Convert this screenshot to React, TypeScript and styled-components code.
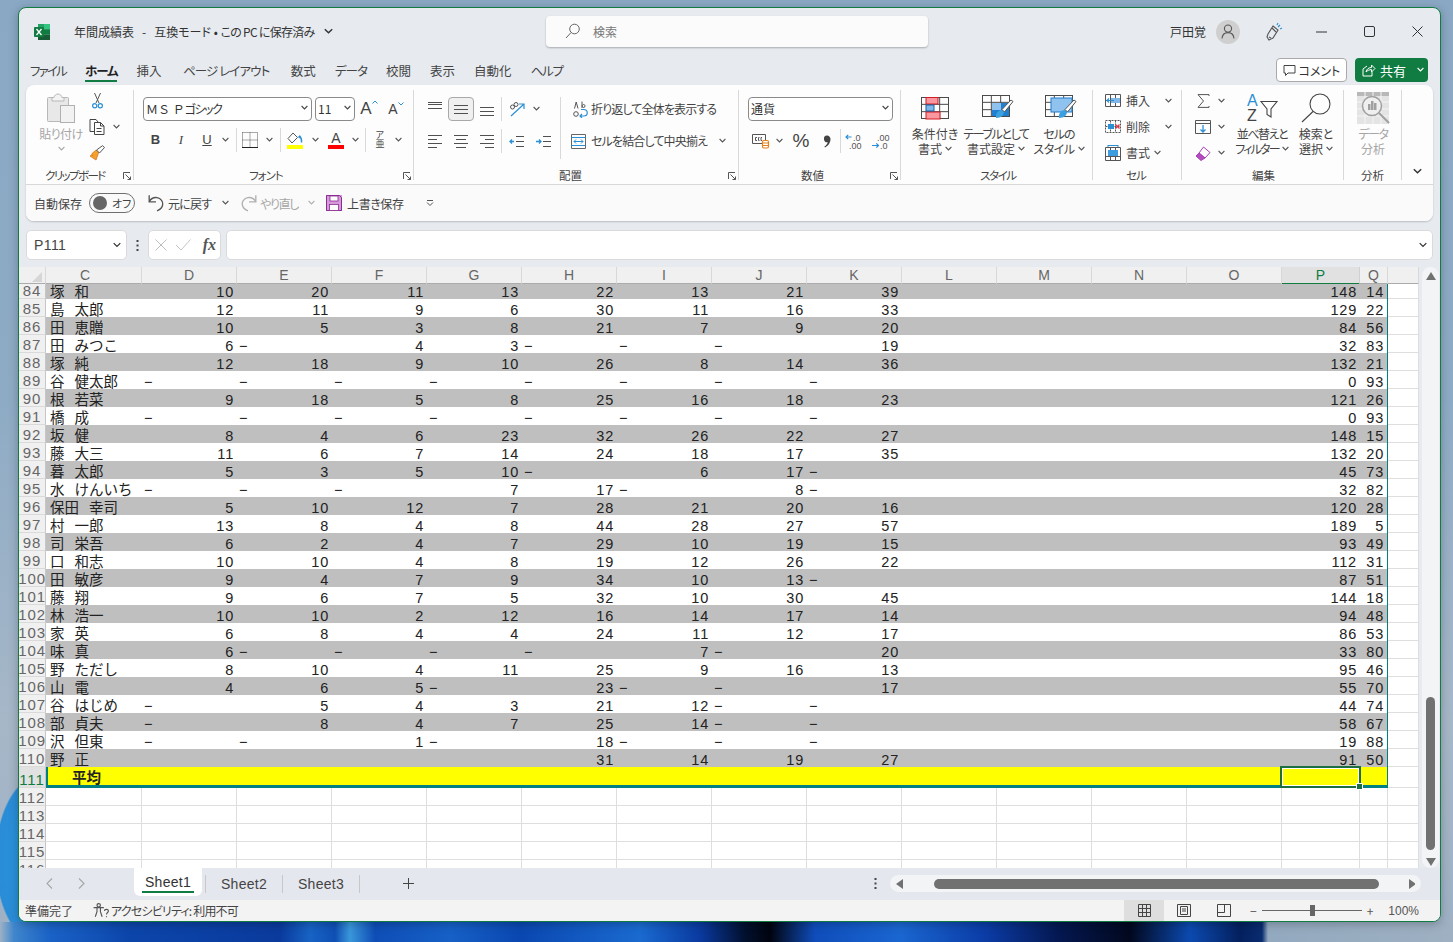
import React from 'react';
import styled, { createGlobalStyle } from 'styled-components';

const UI_FONT = '"Noto Sans CJK JP", "Noto Sans", sans-serif';
const CELL_FONT = '"Liberation Sans", "Noto Sans CJK JP", sans-serif';

const GlobalStyle = createGlobalStyle`
  html, body { margin: 0; padding: 0; }
  body {
    font-family: ${UI_FONT};
    font-feature-settings: "palt";
    font-size: 12px;
    color: #333;
    overflow: hidden;
  }
  * { box-sizing: border-box; }
`;

const Desktop = styled.div`
  width: 1453px;
  height: 942px;
  padding: 7px 12px 20px 18px;
  background:
    linear-gradient(90deg, #9db1c6 0, #3f86cc 14px, #1a62c6 50px, #0c45aa 130px, #0a3a9c 280px, #1763c4 310px, #0f4fb4 335px, #3a97da 350px, #0e4db6 375px, #1660c6 450px, #0a47b0 520px, #1a6ad0 640px, #0a3aa0 700px, #02102e 745px, #01040f 770px, #0f4dbb 815px, #1a66d0 900px, #0b3ca6 985px, #04174f 1060px, #02081e 1130px, #0c4ab0 1190px, #04205e 1240px, #0a2c70 1262px, #93a9bf 1268px, #9eb0c2 1453px) bottom / 100% 20px no-repeat,
    radial-gradient(ellipse 45px 85px at 40px 860px, #2a98e0 0, #2a8cd6 97%, transparent 100%),
    linear-gradient(180deg, #8aa8c4 0, #8eabc5 400px, #a6b7c8 720px, #9eb1c4 100%);
`;

const Window = styled.div`
  width: 1423px;
  height: 915px;
  display: flex;
  flex-direction: column;
  background: #e7ebf0;
  border: 1px solid #107c41;
  border-radius: 8px;
  overflow: hidden;
  box-shadow: 0 2px 10px rgba(0, 0, 0, 0.25);
`;

const Tight = styled.span<{ $ls: number }>`
  letter-spacing: ${(p) => p.$ls}px;
`;
const FullWidth = styled.span`
  font-feature-settings: normal;
`;

/* title bar */
const TitleBar = styled.div`
  height: 47px;
  flex: none;
  display: flex;
  align-items: center;
  padding-left: 15px;
  & > * { flex: none; }
`;
const TitleText = styled.div`
  margin-left: 24px;
  width: 245px;
  font-size: 12px;
  white-space: pre;
  color: #333;
`;
const TitleChevron = styled.span`
  display: flex;
  margin-left: 5px;
`;
const SearchBox = styled.div`
  margin-left: 213px;
  margin-top: -1px;
  width: 382px;
  height: 31px;
  display: flex;
  align-items: center;
  padding-left: 19px;
  gap: 13px;
  color: #777;
  background: #fbfbfb;
  border-radius: 4px;
  box-shadow: 0 1px 2px rgba(0, 0, 0, 0.28);
`;
const UserName = styled.div`
  margin-left: 242px;
  width: 46px;
  color: #333;
`;
const Avatar = styled.div`
  width: 24px;
  height: 24px;
  border-radius: 50%;
  background: #cfcfcf;
  display: flex;
  align-items: center;
  justify-content: center;
`;
const WinIcons = styled.div`
  margin-left: 22px;
  display: flex;
  align-items: center;
`;
const WinBtn = styled.div<{ $w: number }>`
  width: ${(p) => p.$w}px;
  flex: none;
  display: flex;
  justify-content: center;
`;

/* tab row */
const TabRow = styled.div`
  height: 30px;
  flex: none;
  display: flex;
  align-items: center;
  padding: 0 12px 0 11px;
`;
const MenuTabs = styled.div`
  display: flex;
  gap: 19px;
  flex: 1;
  padding-top: 2px;
`;
const MenuTab = styled.div<{ $on?: boolean; $ls: number; $pad?: number }>`
  position: relative;
  font-size: 12.5px;
  line-height: 20px;
  letter-spacing: ${(p) => p.$ls}px;
  padding: 0 ${(p) => p.$pad ?? 0}px;
  color: ${(p) => (p.$on ? '#222' : '#444')};
  font-weight: ${(p) => (p.$on ? 700 : 400)};
  white-space: nowrap;
  &::after {
    content: '';
    display: ${(p) => (p.$on ? 'block' : 'none')};
    position: absolute;
    left: 0;
    right: 0;
    bottom: -1px;
    height: 2px;
    background: #107c41;
  }
`;
const CommentBtn = styled.div`
  width: 71px;
  height: 24px;
  display: flex;
  align-items: center;
  justify-content: center;
  gap: 3px;
  background: #fff;
  border: 1px solid #a9a9a9;
  border-radius: 4px;
  font-size: 12px;
  color: #333;
`;
const ShareBtn = styled.div`
  margin-left: 8px;
  width: 73px;
  height: 24px;
  display: flex;
  align-items: center;
  padding-left: 7px;
  gap: 4px;
  background: #107c41;
  border-radius: 4px;
  font-size: 13px;
  color: #fff;
`;
const ShareChevron = styled.span`
  display: flex;
  margin-left: 7px;
`;

/* ribbon */
const Ribbon = styled.div`
  margin: 0 7px;
  height: 136px;
  flex: none;
  display: flex;
  flex-direction: column;
  background: #fdfdfd;
  border-radius: 8px;
  box-shadow: 0 1px 2px rgba(0, 0, 0, 0.2);
  overflow: hidden;
`;
const Groups = styled.div`
  height: 100px;
  flex: none;
  display: flex;
  padding-top: 5px;
  border-bottom: 1px solid #d8d8d8;
`;
const Group = styled.div<{ $w: number }>`
  width: ${(p) => p.$w}px;
  height: 90px;
  flex: none;
  display: flex;
  flex-direction: column;
  border-right: 1px solid #d9d9d9;
`;
const GroupBody = styled.div<{ $pl?: number; $pt?: number }>`
  flex: 1;
  display: flex;
  min-height: 0;
  padding-left: ${(p) => p.$pl ?? 0}px;
  padding-top: ${(p) => p.$pt ?? 0}px;
`;
const GroupLabel = styled.div<{ $cx: number; $ls?: number }>`
  position: relative;
  height: 14px;
  margin-bottom: -2px;
  line-height: 14px;
  font-size: 11.5px;
  letter-spacing: ${(p) => p.$ls ?? 0}px;
  color: #444;
  white-space: nowrap;
  padding-left: ${(p) => p.$cx}px;
`;
const Launcher = styled.span`
  position: absolute;
  right: 2px;
  top: 4px;
  display: flex;
`;
const Stack = styled.div<{ $w?: number; $gap?: number }>`
  display: flex;
  flex-direction: column;
  width: ${(p) => (p.$w ? `${p.$w}px` : 'auto')};
  flex: none;
  gap: ${(p) => p.$gap ?? 4}px;
`;
const ToolRow = styled.div<{ $h?: number }>`
  height: ${(p) => p.$h ?? 24}px;
  display: flex;
  align-items: center;
`;
const Tool = styled.div<{ $w: number; $pressed?: boolean; $ml?: number }>`
  width: ${(p) => p.$w}px;
  height: 24px;
  margin-left: ${(p) => p.$ml ?? 0}px;
  flex: none;
  display: flex;
  align-items: center;
  justify-content: center;
  color: #444;
  background: ${(p) => (p.$pressed ? '#f0f0f0' : 'transparent')};
  border: ${(p) => (p.$pressed ? '1px solid #a8a8a8' : 'none')};
  border-radius: 4px;
`;
const Sep = styled.div<{ $ml?: number; $h?: number }>`
  width: 1px;
  height: ${(p) => p.$h ?? 24}px;
  margin-left: ${(p) => p.$ml ?? 0}px;
  flex: none;
  background: #d9d9d9;
`;
const ComboBox = styled.div<{ $w: number; $ml?: number }>`
  width: ${(p) => p.$w}px;
  height: 24px;
  margin-left: ${(p) => p.$ml ?? 0}px;
  flex: none;
  display: flex;
  align-items: center;
  justify-content: space-between;
  padding: 0 3px 2px 2px;
  background: #fff;
  border: 1px solid #8a8a8a;
  border-radius: 4px;
  font-size: 12px;
  color: #333;
  white-space: pre;
`;
const FontLetter = styled.span<{ $size?: number; $weight?: number; $italic?: boolean; $under?: boolean; $serif?: boolean }>`
  font-family: ${(p) => (p.$serif ? '"Liberation Serif", serif' : '"Liberation Sans", "Noto Sans CJK JP", sans-serif')};
  font-size: ${(p) => p.$size ?? 13}px;
  line-height: 1.05;
  font-weight: ${(p) => p.$weight ?? 400};
  font-style: ${(p) => (p.$italic ? 'italic' : 'normal')};
  text-decoration: ${(p) => (p.$under ? 'underline' : 'none')};
  color: #444;
`;
const SizeLetter = styled.span`
  display: flex;
  align-items: flex-start;
`;
const ColorLetter = styled.span<{ $bar: string }>`
  display: flex;
  flex-direction: column;
  align-items: center;
  width: 16px;
  &::after {
    content: '';
    width: 16px;
    height: 4px;
    background: ${(p) => p.$bar};
  }
`;
const TextTool = styled.div<{ $w: number; $ml?: number }>`
  width: ${(p) => p.$w}px;
  margin-left: ${(p) => p.$ml ?? 0}px;
  display: flex;
  align-items: center;
  height: 24px;
  padding-bottom: 2px;
  flex: none;
  font-size: 12px;
  color: #444;
  white-space: nowrap;
`;
const TextToolIcon = styled.span<{ $w: number }>`
  width: ${(p) => p.$w}px;
  display: flex;
  flex: none;
  padding-top: 2px;
`;
const TextToolChevron = styled.span<{ $ml: number }>`
  margin-left: ${(p) => p.$ml}px;
  display: flex;
  padding-top: 2px;
`;
const BigBtn = styled.div<{ $w: number; $off?: boolean }>`
  width: ${(p) => p.$w}px;
  flex: none;
  display: flex;
  flex-direction: column;
  align-items: center;
  color: ${(p) => (p.$off ? '#a6a6a6' : '#444')};
  font-size: 12px;
  line-height: 15px;
  white-space: nowrap;
`;
const BigIcon = styled.div<{ $pl?: number }>`
  height: 36px;
  display: flex;
  align-items: center;
  padding-left: ${(p) => p.$pl ?? 0}px;
`;
const BigLine = styled.div`
  display: flex;
  align-items: center;
  gap: 3px;
`;
const PasteChevron = styled(BigLine)`
  height: 15px;
`;
const Collapse = styled.div`
  flex: 1;
  display: flex;
  align-items: flex-end;
  justify-content: center;
  padding-bottom: 10px;
`;

/* quick access */
const QuickBar = styled.div`
  flex: 1;
  display: flex;
  align-items: center;
  padding-left: 8px;
  background: #fafafa;
  font-size: 12px;
  color: #444;
`;
const QuickItem = styled.div<{ $ml?: number; $off?: boolean; $w?: number; $ls?: number }>`
  margin-left: ${(p) => p.$ml ?? 0}px;
  width: ${(p) => (p.$w ? `${p.$w}px` : 'auto')};
  letter-spacing: ${(p) => p.$ls ?? 0}px;
  display: flex;
  flex: none;
  align-items: center;
  white-space: nowrap;
  color: ${(p) => (p.$off ? '#a6a6a6' : '#444')};
`;
const Toggle = styled.div`
  margin-left: 7px;
  width: 46px;
  height: 20px;
  flex: none;
  display: flex;
  align-items: center;
  gap: 5px;
  padding-left: 3px;
  border: 1px solid #6f6f6f;
  border-radius: 10px;
  font-size: 11px;
`;
const ToggleKnob = styled.span`
  width: 14px;
  height: 14px;
  border-radius: 50%;
  background: #666;
`;

/* formula bar */
const FormulaBar = styled.div`
  margin: 9px 7px 7px;
  height: 30px;
  flex: none;
  display: flex;
  align-items: center;
`;
const NameBox = styled.div`
  width: 101px;
  height: 30px;
  display: flex;
  align-items: center;
  justify-content: space-between;
  padding: 0 5px 0 7px;
  background: #fff;
  border: 1px solid #dadada;
  border-radius: 5px;
  font: 14px ${CELL_FONT};
  letter-spacing: 0.4px;
  color: #444;
`;
const Kebab = styled.div`
  width: 21px;
  display: flex;
  justify-content: center;
`;
const FxBox = styled.div`
  width: 73px;
  height: 30px;
  display: flex;
  align-items: center;
  justify-content: space-between;
  padding: 0 4px 0 6px;
  background: #fff;
  border: 1px solid #dadada;
  border-radius: 5px;
  font: italic 700 16px "Liberation Serif", serif;
  color: #555;
`;
const FxMarks = styled.span`
  display: flex;
  align-items: center;
  gap: 8px;
`;
const FormulaInput = styled.div`
  margin-left: 5px;
  flex: 1;
  height: 30px;
  display: flex;
  align-items: center;
  justify-content: flex-end;
  padding-right: 5px;
  background: #fff;
  border: 1px solid #dadada;
  border-radius: 5px;
`;

/* sheet */
const SheetArea = styled.div`
  height: 601px;
  flex: none;
  display: flex;
  overflow: hidden;
`;
const Grid = styled.div`
  width: 1400px;
  flex: none;
  background: #fff;
  overflow: hidden;
`;
const COLS = '27px 96px repeat(12, 95px) 78px 28px 31px';
const SheetRow = styled.div<{ $h: number }>`
  display: grid;
  grid-template-columns: ${COLS};
  height: ${(p) => p.$h}px;
`;
const ColHead = styled.div<{ $on?: boolean; $shift?: number }>`
  display: flex;
  align-items: flex-end;
  justify-content: center;
  padding-right: ${(p) => p.$shift ?? 0}px;
  font: 14px/16px ${CELL_FONT};
  color: ${(p) => (p.$on ? '#107c41' : '#666')};
  background: ${(p) => (p.$on ? '#e1e1e1' : '#f0f0f0')};
  border-right: 1px solid ${(p) => (p.$on ? '#d0d0d0' : '#d8d8d8')};
  border-bottom: 2px solid ${(p) => (p.$on ? '#107c41' : '#ababab')};
`;
const CornerHead = styled(ColHead)`
  justify-content: flex-end;
  padding: 0 3px 1px 0;
`;
const RowHead = styled.div<{ $on?: boolean }>`
  display: flex;
  align-items: flex-end;
  justify-content: center;
  font: 15px/14px ${CELL_FONT};
  letter-spacing: 0.9px;
  white-space: nowrap;
  color: ${(p) => (p.$on ? '#107c41' : '#666')};
  background: ${(p) => (p.$on ? '#e1e1e1' : '#f0f0f0')};
  border-bottom: 1px solid #dadada;
  border-right: 1px solid #c6c6c6;
`;
type Fill = 'gray' | 'white' | 'yellow';
const FILL: Record<Fill, string> = { gray: '#bfbfbf', white: '#ffffff', yellow: '#ffff00' };
const Cell = styled.div<{ $fill?: Fill; $teal?: boolean; $total?: boolean; $leftEdge?: boolean }>`
  position: relative;
  display: flex;
  align-items: flex-end;
  justify-content: flex-end;
  padding-right: 3px;
  min-width: 0;
  font: 14.5px/14px ${CELL_FONT};
  letter-spacing: 0.8px;
  color: #222;
  white-space: nowrap;
  background: ${(p) => (p.$fill ? FILL[p.$fill] : '#fff')};
  border-right: ${(p) => (p.$teal ? '1px solid #008080' : p.$fill ? 'none' : '1px solid #dedede')};
  border-bottom: ${(p) => (p.$total ? '3px solid #008080' : p.$fill ? 'none' : '1px solid #dedede')};
  border-left: ${(p) => (p.$leftEdge ? '2px solid #008080' : 'none')};
`;
const DashCell = styled(Cell)`
  justify-content: flex-start;
  padding-left: 2px;
`;
const NameCell = styled(Cell)<{ $bold?: boolean; $indent?: number }>`
  justify-content: flex-start;
  padding-left: ${(p) => 4 + (p.$indent ?? 0)}px;
  font: ${(p) => (p.$bold ? 700 : 400)} 14.5px/13px ${CELL_FONT};
  letter-spacing: 0;
  font-feature-settings: "palt" 0;
`;
const Surname = styled.span`
  margin-right: 10px;
`;
const SelectedCell = styled(Cell)`
  &::before {
    content: '';
    position: absolute;
    left: -2px;
    top: -1px;
    right: -1px;
    bottom: -3px;
    border: 2px solid #1d6f42;
    box-shadow: inset 0 0 0 1px #fff;
    z-index: 2;
  }
  &::after {
    content: '';
    position: absolute;
    right: -2px;
    bottom: -4px;
    width: 5px;
    height: 5px;
    background: #1d6f42;
    outline: 1px solid #fff;
    z-index: 3;
  }
`;
const ScrollV = styled.div`
  flex: 1;
  padding: 0 1px 0 3px;
`;
const ScrollTrack = styled.div`
  height: 601px;
  display: flex;
  flex-direction: column;
  align-items: center;
  background: #f3f4f6;
  border-radius: 9px;
  padding-top: 5px;
`;
const ThumbV = styled.div`
  margin-top: 417px;
  width: 9px;
  height: 153px;
  background: #717171;
  border-radius: 5px;
`;
const ArrowDown = styled.div`
  margin-top: 8px;
  display: flex;
`;

/* sheet tabs */
const SheetTabs = styled.div`
  height: 32px;
  flex: none;
  display: flex;
  align-items: flex-start;
  background: #e4e7ee;
  padding-left: 24px;
  & > * { flex: none; }
`;
const NavArrows = styled.div`
  width: 91px;
  height: 30px;
  display: flex;
  align-items: center;
  gap: 25px;
  padding-left: 3px;
`;
const ActiveTab = styled.div`
  width: 68px;
  height: 28px;
  display: flex;
  flex-direction: column;
  align-items: center;
  padding-top: 3px;
  background: #fff;
  border-radius: 0 0 6px 6px;
  font: 14px/22px "Liberation Sans", sans-serif;
  color: #333;
  letter-spacing: 0.3px;
  &::after {
    content: '';
    width: 52px;
    height: 2px;
    flex: none;
    margin-top: -2px;
    background: #107c41;
  }
`;
const SheetTab = styled.div<{ $w: number }>`
  width: ${(p) => p.$w}px;
  height: 18px;
  margin-top: 7px;
  display: flex;
  align-items: center;
  justify-content: center;
  font: 14px "Liberation Sans", sans-serif;
  letter-spacing: 0.3px;
  color: #444;
  border-right: 1px solid #c8c8c8;
`;
const SheetTabGap = styled.div`
  width: 4px;
  height: 18px;
  margin-top: 7px;
  border-right: 1px solid #c8c8c8;
`;
const AddSheet = styled.div`
  width: 96px;
  height: 30px;
  display: flex;
  align-items: center;
  justify-content: center;
`;
const Kebab2 = styled.div`
  margin-left: 404px;
  width: 30px;
  height: 30px;
  display: flex;
  align-items: center;
  justify-content: center;
`;
const ScrollH = styled.div`
  margin-top: 7px;
  width: 531px;
  height: 17px;
  display: flex;
  align-items: center;
  padding: 0 6px;
  background: #f3f4f6;
  border-radius: 9px;
`;
const ThumbH = styled.div`
  margin-left: 31px;
  margin-right: 30px;
  width: 445px;
  height: 10px;
  flex: none;
  background: #717171;
  border-radius: 5px;
`;

/* status bar */
const StatusBar = styled.div`
  flex: 1;
  display: flex;
  align-items: center;
  padding-left: 6px;
  background: #f3f3f3;
  font-size: 12px;
  color: #444;
`;
const Accessibility = styled.div`
  margin-left: 20px;
  display: flex;
  align-items: center;
  gap: 2px;
  flex: 1;
  letter-spacing: -0.8px;
`;
const ViewBtn = styled.div<{ $on?: boolean }>`
  width: 40px;
  height: 21px;
  display: flex;
  align-items: center;
  justify-content: center;
  background: ${(p) => (p.$on ? '#dedede' : 'transparent')};
`;
const Zoom = styled.div`
  width: 196px;
  padding-left: 6px;
  display: flex;
  align-items: center;
  color: #555;
`;
const ZoomTrack = styled.div`
  position: relative;
  width: 100px;
  height: 1px;
  margin: 0 5px;
  background: #666;
`;
const ZoomKnob = styled.span`
  position: absolute;
  left: 48px;
  top: -5px;
  width: 5px;
  height: 11px;
  background: #666;
`;
const ZoomLabel = styled.span`
  margin-left: 15px;
  font: 12px "Liberation Sans", sans-serif;
`;

/* icons */
const DARK = '#505050';
const BLUE = '#2b8fd6';

const Chev = ({ c = '#555', s = 7 }: { c?: string; s?: number }) => (
  <svg width={s} height={s * 0.6 + 1} viewBox="0 0 7 5">
    <path d="M.6.9 3.5 3.8 6.4.9" fill="none" stroke={c} strokeWidth="1.1" />
  </svg>
);
const ExcelLogo = () => (
  <svg width="16" height="16" viewBox="0 0 16 16">
    <rect x="4" width="12" height="5.4" fill="#21a366" />
    <rect x="10" width="6" height="5.4" fill="#33c481" />
    <rect x="4" y="5.3" width="12" height="5.4" fill="#107c41" />
    <rect x="4" y="10.6" width="12" height="5.4" fill="#185c37" />
    <rect y="3" width="10" height="10" rx="1" fill="#107c41" />
    <path d="M2.5 5 7.5 11M7.5 5 2.5 11" stroke="#fff" strokeWidth="1.3" />
  </svg>
);
const SearchIcon = () => (
  <svg width="15" height="16" viewBox="0 0 15 16" fill="none" stroke="#666">
    <circle cx="9.5" cy="6" r="4.8" />
    <path d="M6 9.6 1 15" />
  </svg>
);
const PersonIcon = () => (
  <svg width="14" height="15" viewBox="0 0 14 15" fill="none" stroke="#555" strokeWidth="1.1">
    <circle cx="7" cy="4.6" r="3.6" />
    <path d="M1 14.5C1.4 10.8 3.6 8.6 7 8.6s5.6 2.2 6 5.9" />
  </svg>
);
const PenIcon = () => (
  <svg width="17" height="19" viewBox="0 0 17 19" fill="none" stroke="#555" strokeWidth="1.1">
    <path d="M7 4 12 8 7 16 3 18 1 15 2 12Z" />
    <path d="M6 6 10 10M3 15 5 16" />
    <path d="M12 5 14 3M14 7l2-1M11 3l1-2" stroke="#2b8fd6" />
  </svg>
);
const MinIcon = () => (
  <svg width="11" height="2" viewBox="0 0 11 2">
    <path d="M0 1h11" stroke="#333" />
  </svg>
);
const MaxIcon = () => (
  <svg width="11" height="11" viewBox="0 0 11 11">
    <rect x=".5" y=".5" width="10" height="10" rx="1.5" fill="none" stroke="#333" />
  </svg>
);
const CloseIcon = () => (
  <svg width="11" height="11" viewBox="0 0 11 11">
    <path d="M.5.5l10 10M10.5.5l-10 10" stroke="#333" />
  </svg>
);
const CommentIcon = () => (
  <svg width="13" height="13" viewBox="0 0 13 13" fill="none" stroke="#444">
    <path d="M1 1.5h11v7.5H5L2.5 11.5V9H1z" />
  </svg>
);
const ShareIcon = () => (
  <svg width="14" height="13" viewBox="0 0 14 13" fill="none" stroke="#fff">
    <path d="M10 7.5V12H1V5l4-3" />
    <path d="M4 8c.5-3 3-4.5 5.5-4.5V1L13 4.5 9.500 8V5.600C7.500 5.600 5.500 6.500 4 8Z" />
  </svg>
);
const PasteIcon = () => (
  <svg width="28" height="30" viewBox="0 0 28 30">
    <rect x=".5" y="4.5" width="21" height="24" rx="1" fill="#e8e8e8" stroke="#b8b8b8" />
    <path d="M7 4.5C7 2.800 9 1 11 1s4 1.800 4 3.500h2V8H5V4.500Z" fill="#f3f3f3" stroke="#b8b8b8" />
    <rect x="13.5" y="12.5" width="14" height="17" fill="#f2f2f2" stroke="#b0b0b0" />
  </svg>
);
const CutIcon = () => (
  <svg width="11" height="16" viewBox="0 0 11 16" fill="none">
    <path d="M2.5 0 7 10M8.500 0 4 10" stroke="#555" />
    <circle cx="2.7" cy="12.8" r="2.1" stroke={BLUE} strokeWidth="1.2" />
    <circle cx="8.3" cy="12.8" r="2.1" stroke={BLUE} strokeWidth="1.2" />
  </svg>
);
const CopyIcon = () => (
  <svg width="16" height="16" viewBox="0 0 16 16" fill="none" stroke="#444">
    <path d="M5 12.5H1V.5h6l2 2.500" />
    <path d="M5.5 3.5h6l3.500 3.500v8.500H5.500z" />
    <path d="M11.5 3.5V7H15M7.500 9.500h5M7.500 12.500h5" />
  </svg>
);
const PainterIcon = () => (
  <svg width="16" height="16" viewBox="0 0 16 16">
    <path d="M9.5 5.5 10 6.500 7 15l-6-4 2-1 1 .5L2.500 9l4-3.500z" fill="#f4a12c" stroke="#d9751a" strokeWidth=".8" />
    <path d="M7.5 5 10.500 8 15.500 2.500 13.500.7z" fill="#fff" stroke="#555" />
  </svg>
);
const LauncherIcon = () => (
  <svg width="8" height="8" viewBox="0 0 8 8" fill="none" stroke="#555">
    <path d="M.5 7V.5H7M2.500 2.500 7.500 7.500M7.500 4.500v3h-3" />
  </svg>
);
const Caret = ({ up }: { up?: boolean }) => (
  <svg width="6" height="4" viewBox="0 0 6 4">
    <path d={up ? 'M.5 3.5 3 1l2.500 2.500' : 'M.5.5 3 3 5.500.5'} fill="none" stroke={BLUE} />
  </svg>
);
const BorderIcon = () => (
  <svg width="16" height="16" viewBox="0 0 16 16" fill="none">
    <path d="M.5.5h15v15M.5.5v15M8 .5v15M.5 8h15" stroke="#555" strokeDasharray="1 1" />
    <path d="M0 15.5h16" stroke="#222" />
  </svg>
);
const BucketIcon = () => (
  <svg width="16" height="13" viewBox="0 0 16 13" fill="none">
    <path d="M6 1 1 6.500 5 11l5.500-5.500z" stroke="#555" fill="#fff" />
    <path d="M12 4c2 1 2.800 3 2.500 6.500" stroke={BLUE} strokeWidth="1.5" />
    <path d="M10.7 5 13.300 3.600V6.800z" fill={BLUE} />
  </svg>
);
const Lines = ({ rows }: { rows: [number, number, number][] }) => (
  <svg width="16" height="14" viewBox="0 0 16 14">
    {rows.map(([a, b, y]) => (
      <path key={`${a}${b}${y}`} d={`M${a} ${y + 0.5}H${b}`} stroke={DARK} />
    ))}
  </svg>
);
const IndentIcon = ({ more }: { more?: boolean }) => (
  <svg width="15" height="11" viewBox="0 0 15 11" fill="none">
    <path d="M7 .5h8M7 5.500h8M7 10.500h8" stroke={DARK} />
    <path d={more ? 'M0 5.5h4.500M3 3.500l2 2-2 2' : 'M5 5.5H.8M3 3.500l-2 2 2 2'} stroke={BLUE} strokeWidth="1.3" />
  </svg>
);
const OrientIcon = () => (
  <svg width="17" height="15" viewBox="0 0 17 15" fill="none">
    <path d="M2 14 14.500 2.500M10 2h5v5" stroke={BLUE} strokeWidth="1.2" />
    <circle cx="3.5" cy="5" r="2" stroke="#555" />
    <circle cx="7" cy="2.5" r="2" stroke="#555" />
  </svg>
);
const WrapIcon = () => (
  <svg width="15" height="17" viewBox="0 0 15 17" fill="none">
    <path d="M7 15h3.500c5 0 5-6.500 0-6.500H8M9 13l-2 2 2 2" stroke={BLUE} strokeWidth="1.2" />
    <circle cx="3" cy="13" r="2.3" stroke="#555" />
    <path d="M1.5 7.500 3.200 1l1.800 6.500M9 .5v6.500M9 5c.5-2 3-2 3 0s-2.500 2-3 0" stroke="#555" />
  </svg>
);
const MergeIcon = () => (
  <svg width="15" height="15" viewBox="0 0 15 15" fill="none">
    <path d="M.5.5h14v14H.5z" stroke="#666" />
    <path d="M.5 3.500h14M.5 11.500h14" stroke="#2b8fd6" />
    <path d="M3 7.500h9M5 5.500l-2 2 2 2M10 5.500l2 2-2 2" stroke={BLUE} />
  </svg>
);
const AccountIcon = () => (
  <svg width="18" height="16" viewBox="0 0 18 16" fill="none">
    <path d="M.5 1.500h13v9H.5z" stroke="#555" />
    <path d="M5 4.500H3.500v3H5M7.500 4.500H6.500v3h1M10 4.500H9v3h1" stroke="#555" />
    <rect x="10.5" y="7.5" width="6" height="7.5" rx="1.5" fill="#fff" stroke="#e2831e" strokeWidth="1.2" />
    <path d="M10.5 10h6M10.500 12.500h6" stroke="#e2831e" />
  </svg>
);
const CommaIcon = () => (
  <svg width="8" height="13" viewBox="0 0 8 13">
    <path d="M4 .5a3.500 3.500 0 0 1 3.500 3.800c0 3.600-2.500 6.700-5.500 8.200l-.6-.9c1.800-1.100 3-2.800 3.300-4.300A3.300 3.300 0 1 1 4 .5z" fill="#444" />
  </svg>
);
const DecimalIcon = ({ more }: { more?: boolean }) => (
  <svg width="18" height="17" viewBox="0 0 18 17" fontFamily="Liberation Sans, sans-serif" fontSize="9" fill="#555">
    <text x={more ? 8 : 5} y="8">{more ? '.0' : '.00'}</text>
    <text x={more ? 4 : 8} y="16">{more ? '.00' : '.0'}</text>
    <path d={more ? 'M6.500 4H1M3.200 1.800 1 4l2.200 2.200' : 'M0 12.500h6.500M4.300 10.300l2.200 2.200-2.200 2.200'} fill="none" stroke={BLUE} strokeWidth="1.2" />
  </svg>
);
const GridBase = ({ w = 27, h = 22 }: { w?: number; h?: number }) => (
  <g fill="none" stroke="#4a4a4a" strokeWidth="1">
    <rect x=".5" y=".5" width={w - 1} height={h - 1} />
    <path d={`M${w / 3} 0V${h}M${(w * 2) / 3} 0V${h}M0 ${h / 3}H${w}M0 ${(h * 2) / 3}H${w}`} />
  </g>
);
const CondIcon = () => (
  <svg width="28" height="23" viewBox="0 0 28 23">
    <GridBase w={28} h={22} />
    <rect x="5" y=".5" width="12" height="6.5" fill="#f8979f" stroke="#d41a22" />
    <rect x="5" y="15" width="14" height="7" fill="#f8979f" stroke="#d41a22" />
    <rect x="5" y="8" width="8" height="6" fill="#7fb8e8" stroke="#1a5fa8" />
  </svg>
);
const Brush = () => (
  <g>
    <path d="M14 20c1-4 4-5 6-5l2 2c0 3-3 6-8 6z" fill="#3aa0e0" />
    <path d="M20 14.500 29 5l2 1.500-8.500 10.500z" fill="#fff" stroke="#555" />
  </g>
);
const TableStyleIcon = () => (
  <svg width="32" height="27" viewBox="0 0 32 27">
    <GridBase w={28} h={22} />
    <rect x="10" y="8" width="17" height="13" fill="#1f7fd0" />
    <rect x="10" y="8" width="9" height="7" fill="#8fc2ee" />
    <Brush />
  </svg>
);
const CellStyleIcon = () => (
  <svg width="32" height="27" viewBox="0 0 32 27">
    <GridBase w={28} h={22} />
    <rect x="6" y="3" width="21" height="14" fill="#8fc2ee" stroke="#1f7fd0" />
    <Brush />
  </svg>
);
const InsertCellIcon = () => (
  <svg width="16" height="14" viewBox="0 0 16 14" fill="none">
    <path d="M.5.5h15v12H.5zM.5 6.500h15M5.500.5v12M10.500.5v12" stroke="#555" />
    <rect x="6" y="4" width="9" height="5" fill="#7fb8e8" />
    <path d="M9 6.500H2M4 4.500l-2 2 2 2" stroke={BLUE} strokeWidth="1.2" />
  </svg>
);
const DeleteCellIcon = () => (
  <svg width="16" height="14" viewBox="0 0 16 14" fill="none">
    <path d="M.5.5h15v12H.5zM.5 6.500h15M5.500.5v12M10.500.5v12" stroke="#555" strokeDasharray="2 1" />
    <rect x="3" y="4" width="6" height="5" fill="#2b8fd6" />
    <path d="M10.5 4.500l4 4M14.500 4.500l-4 4" stroke="#e2364a" strokeWidth="1.2" />
  </svg>
);
const FormatCellIcon = () => (
  <svg width="16" height="16" viewBox="0 0 16 16" fill="none">
    <path d="M.5 2.500h15v13H.5zM.5 11.500h15M5.500 2.500v13M10.500 2.500v13" stroke="#555" />
    <rect x="3" y="5" width="10" height="6" fill="#3d9be0" />
    <path d="M3 .5h10M3 0v2M13 0v2" stroke={BLUE} />
  </svg>
);
const SigmaIcon = () => (
  <svg width="13" height="14" viewBox="0 0 13 14" fill="none">
    <path d="M12 2V.6H1L6.500 7 1 13.400h11V12" stroke="#555" />
  </svg>
);
const FillDownIcon = () => (
  <svg width="16" height="14" viewBox="0 0 16 14" fill="none">
    <path d="M.5.5h15v13H.5zM.5 3.500h15" stroke="#555" />
    <path d="M8 5v7M5.500 9.500 8 12l2.500-2.500" stroke={BLUE} strokeWidth="1.3" />
  </svg>
);
const EraserIcon = () => (
  <svg width="16" height="15" viewBox="0 0 16 15">
    <path d="M8.500 1 15 6.500 10 12 4 7z" fill="#fff" stroke="#a83fb5" />
    <path d="M4 7 1 10l5 4.500 4-2.500z" fill="#b44cc0" stroke="#a83fb5" />
  </svg>
);
const SortIcon = () => (
  <svg width="38" height="36" viewBox="0 -4 38 36" fontFamily="Liberation Sans, sans-serif" fontSize="16">
    <text x="4" y="12" fill="#2b8fd6">A</text>
    <text x="4" y="27" fill="#444">Z</text>
    <path d="M18 7.500h16L28 15v8l-4-2.500V15z" fill="#fff" stroke="#444" strokeWidth="1.1" />
  </svg>
);
const FindIcon = () => (
  <svg width="30" height="30" viewBox="0 0 30 30" fill="none" stroke="#444" strokeWidth="1.1">
    <circle cx="19" cy="11" r="10" />
    <path d="M12 18.500 1 29" />
  </svg>
);
const AnalysisIcon = () => (
  <svg width="33" height="32" viewBox="0 0 33 32" fill="none">
    <rect width="32" height="32" fill="#e4e4e4" />
    <rect y="0" width="32" height="4" fill="#b8b8b8" />
    <path d="M0 10h32M0 17h32M0 24h32M8 0v32M16 0v32M24 0v32" stroke="#f4f4f4" />
    <circle cx="15" cy="14" r="9.5" fill="#efefef" stroke="#a0a0a0" strokeWidth="1.5" />
    <rect x="11" y="12" width="2.5" height="6" fill="#a0a0a0" />
    <rect x="14" y="9" width="2.5" height="9" fill="#a0a0a0" />
    <rect x="17" y="11" width="2.5" height="7" fill="#a0a0a0" />
    <path d="M22 21 32 31" stroke="#a0a0a0" strokeWidth="2" />
  </svg>
);
const UndoIcon = ({ c, flip }: { c: string; flip?: boolean }) => (
  <svg width="17" height="18" viewBox="0 0 15 16" fill="none" stroke={c} strokeWidth="1.2">
    <g transform={flip ? 'matrix(-1 0 0 1 15 0)' : undefined}>
      <path d="M1 1v6h6" />
      <path d="M1.2 6.500C3 3.500 5.500 2.800 8 3.200c3.500.7 5.500 3.600 5 6.300-.3 2.500-2.500 4.500-5 5.500" />
    </g>
  </svg>
);
const SaveIcon = () => (
  <svg width="16" height="16" viewBox="0 0 16 16">
    <rect width="16" height="16" fill="#d69ad8" />
    <path d="M.5.5h13l2 2v13H.5z" fill="#d69ad8" stroke="#8a2c92" />
    <rect x="4" y="1" width="8" height="5" fill="#fff" stroke="#8a2c92" strokeWidth=".8" />
    <rect x="3.5" y="9.5" width="9" height="6" fill="#fff" stroke="#8a2c92" strokeWidth=".8" />
  </svg>
);
const QatMenuIcon = () => (
  <svg width="8" height="6" viewBox="0 0 8 6" fill="none" stroke="#555">
    <path d="M1 .5h6M1 2.500 4 5.500l3-3" />
  </svg>
);
const KebabIcon = () => (
  <svg width="3" height="11" viewBox="0 0 3 11" fill="#444">
    <rect x=".5" width="2" height="2" />
    <rect x=".5" y="4.5" width="2" height="2" />
    <rect x=".5" y="9" width="2" height="2" />
  </svg>
);
const CrossMark = () => (
  <svg width="12" height="12" viewBox="0 0 12 12">
    <path d="M.5.5l11 11M11.500.5l-11 11" stroke="#bdbdbd" />
  </svg>
);
const CheckMark = () => (
  <svg width="16" height="12" viewBox="0 0 16 12" fill="none">
    <path d="M1 6l5 5L15.500.5" stroke="#c4c4c4" />
  </svg>
);
const Tri = ({ dir, c = '#717171' }: { dir: 'up' | 'down' | 'left' | 'right'; c?: string }) => {
  const d = { up: 'M0 8 5 0l5 8z', down: 'M0 0h10L5 8z', left: 'M7 0v10L0 5z', right: 'M0 0v10l7-5z' }[dir];
  return (
    <svg width={dir === 'up' || dir === 'down' ? 10 : 7} height={dir === 'up' || dir === 'down' ? 8 : 10}>
      <path d={d} fill={c} />
    </svg>
  );
};
const NavArrow = ({ right }: { right?: boolean }) => (
  <svg width="7" height="11" viewBox="0 0 7 11" fill="none" stroke="#a6a6a6" strokeWidth="1.1">
    <path d={right ? 'M1 .5l5 5-5 5' : 'M6 .5l-5 5 5 5'} />
  </svg>
);
const PlusIcon = () => (
  <svg width="11" height="11" viewBox="0 0 11 11">
    <path d="M5.500 0v11M0 5.500h11" stroke="#444" />
  </svg>
);
const A11yIcon = () => (
  <svg width="16" height="15" viewBox="0 0 14 13" fill="none" stroke="#555">
    <circle cx="5" cy="2" r="1.5" />
    <path d="M.5 4h9M3.500 4.500v3L2 12M6.500 4.500v3L8 12" />
    <path d="M10 7c0-2 3.500-2 3.500 0 0 1.300-1.700 1.300-1.700 3M11.800 11.500v1" />
  </svg>
);
const NormalViewIcon = () => (
  <svg width="13" height="13" viewBox="0 0 13 13" fill="none" stroke="#444">
    <path d="M.5.5h12v12H.5zM4.500.5v12M8.500.5v12M.5 4.500h12M.5 8.500h12" />
  </svg>
);
const PageViewIcon = () => (
  <svg width="14" height="13" viewBox="0 0 14 13" fill="none" stroke="#444">
    <path d="M.5.500h13v12H.5zM3.500 2.500h7v8h-7zM5 5h4M5 7h4" />
  </svg>
);
const BreakViewIcon = () => (
  <svg width="14" height="13" viewBox="0 0 14 13" fill="none" stroke="#444">
    <path d="M.5.500h13v12H.5zM.5 8.500h7V.5" />
  </svg>
);
const CornerMark = () => (
  <svg width="10" height="10" viewBox="0 0 10 10">
    <path d="M10 0v10H0z" fill="#d6d6d6" />
  </svg>
);

/* data */
type Val = number | '-' | null;
type Row = [number, string, string, Val[], number, number];
const D: Val = '-';
const ROWS: Row[] = [
  [84, '塚', '和', [10, 20, 11, 13, 22, 13, 21, 39], 148, 14],
  [85, '島', '太郎', [12, 11, 9, 6, 30, 11, 16, 33], 129, 22],
  [86, '田', '恵贈', [10, 5, 3, 8, 21, 7, 9, 20], 84, 56],
  [87, '田', 'みつこ', [6, D, 4, 3, D, D, D, 19], 32, 83],
  [88, '塚', '純', [12, 18, 9, 10, 26, 8, 14, 36], 132, 21],
  [89, '谷', '健太郎', [D, D, D, D, D, D, D, D], 0, 93],
  [90, '根', '若菜', [9, 18, 5, 8, 25, 16, 18, 23], 121, 26],
  [91, '橋', '成', [D, D, D, D, D, D, D, D], 0, 93],
  [92, '坂', '健', [8, 4, 6, 23, 32, 26, 22, 27], 148, 15],
  [93, '藤', '大三', [11, 6, 7, 14, 24, 18, 17, 35], 132, 20],
  [94, '暮', '太郎', [5, 3, 5, 10, D, 6, 17, D], 45, 73],
  [95, '水', 'けんいち', [D, D, D, 7, 17, D, 8, D], 32, 82],
  [96, '保田', '幸司', [5, 10, 12, 7, 28, 21, 20, 16], 120, 28],
  [97, '村', '一郎', [13, 8, 4, 8, 44, 28, 27, 57], 189, 5],
  [98, '司', '栄吾', [6, 2, 4, 7, 29, 10, 19, 15], 93, 49],
  [99, '口', '和志', [10, 10, 4, 8, 19, 12, 26, 22], 112, 31],
  [100, '田', '敏彦', [9, 4, 7, 9, 34, 10, 13, D], 87, 51],
  [101, '藤', '翔', [9, 6, 7, 5, 32, 10, 30, 45], 144, 18],
  [102, '林', '浩一', [10, 10, 2, 12, 16, 14, 17, 14], 94, 48],
  [103, '家', '英', [6, 8, 4, 4, 24, 11, 12, 17], 86, 53],
  [104, '味', '真', [6, D, D, D, D, 7, D, 20], 33, 80],
  [105, '野', 'ただし', [8, 10, 4, 11, 25, 9, 16, 13], 95, 46],
  [106, '山', '電', [4, 6, 5, D, 23, D, D, 17], 55, 70],
  [107, '谷', 'はじめ', [D, 5, 4, 3, 21, 12, D, D], 44, 74],
  [108, '部', '貞夫', [D, 8, 4, 7, 25, 14, D, D], 58, 67],
  [109, '沢', '但東', [D, D, 1, D, 18, D, D, D], 19, 88],
  [110, '野', '正', [null, null, null, null, 31, 14, 19, 27], 91, 50],
];
const COL_NAMES = ['C', 'D', 'E', 'F', 'G', 'H', 'I', 'J', 'K', 'L', 'M', 'N', 'O', 'P', 'Q', ''];
const MENU: [string, number, number?][] = [
  ['ファイル', -1.8],
  ['ホーム', -1.1],
  ['挿入', 0],
  ['ページ レイアウト', -0.9, 2.5],
  ['数式', 0],
  ['データ', -0.9],
  ['校閲', 0],
  ['表示', 0],
  ['自動化', 0],
  ['ヘルプ', -1.2],
];

const DataRow = ({ row, first }: { row: Row; first: boolean }) => {
  const [no, last, given, vals, total, rank] = row;
  const fill: Fill = no % 2 === 0 ? 'gray' : 'white';
  return (
    <SheetRow $h={first ? 15 : 18}>
      <RowHead>{no}</RowHead>
      <NameCell $fill={fill}>
        <Surname>{last}</Surname>
        {given}
      </NameCell>
      {vals.map((v, i) =>
        v === '-' ? (
          <DashCell key={i} $fill={fill}>−</DashCell>
        ) : (
          <Cell key={i} $fill={fill}>{v}</Cell>
        ),
      )}
      {[0, 1, 2, 3].map((i) => (
        <Cell key={`e${i}`} $fill={fill} />
      ))}
      <Cell $fill={fill}>{total}</Cell>
      <Cell $fill={fill} $teal>{rank}</Cell>
      <Cell />
    </SheetRow>
  );
};

const Sheet = () => (
  <Grid>
    <SheetRow $h={17}>
      <CornerHead><CornerMark /></CornerHead>
      {COL_NAMES.map((c, i) => (
        <ColHead key={i} $on={c === 'P'} $shift={c === 'C' ? 17 : 0}>{c}</ColHead>
      ))}
    </SheetRow>
    {ROWS.map((r, i) => (
      <DataRow key={r[0]} row={r} first={i === 0} />
    ))}
    <SheetRow $h={21}>
      <RowHead $on>111</RowHead>
      <NameCell $fill="yellow" $total $leftEdge $bold $indent={20}>
        <Surname>平均</Surname>
      </NameCell>
      {Array.from({ length: 12 }).map((_, i) => (
        <Cell key={i} $fill="yellow" $total />
      ))}
      <SelectedCell $fill="yellow" $total />
      <Cell $fill="yellow" $total $teal />
      <Cell />
    </SheetRow>
    {[112, 113, 114, 115, 116].map((n) => (
      <SheetRow key={n} $h={18}>
        <RowHead>{n}</RowHead>
        {COL_NAMES.map((c, i) => (
          <Cell key={i} />
        ))}
      </SheetRow>
    ))}
  </Grid>
);

const App = () => (
  <Desktop>
    <GlobalStyle />
    <Window>
      <TitleBar>
        <ExcelLogo />
        <TitleText>
          {'年間成績表   -   互換モード • '}
          <Tight $ls={-0.7}>この PC に保存済み</Tight>
        </TitleText>
        <TitleChevron><Chev c="#333" s={9} /></TitleChevron>
        <SearchBox><SearchIcon />検索</SearchBox>
        <UserName>戸田覚</UserName>
        <Avatar><PersonIcon /></Avatar>
        <WinIcons>
          <WinBtn $w={24}><PenIcon /></WinBtn>
          <WinBtn $w={70}><MinIcon /></WinBtn>
          <WinBtn $w={26}><MaxIcon /></WinBtn>
          <WinBtn $w={70}><CloseIcon /></WinBtn>
        </WinIcons>
      </TitleBar>

      <TabRow>
        <MenuTabs>
          {MENU.map(([m, ls, pad]) => (
            <MenuTab key={m} $on={m === 'ホーム'} $ls={ls} $pad={pad}>{m}</MenuTab>
          ))}
        </MenuTabs>
        <CommentBtn><CommentIcon />コメント</CommentBtn>
        <ShareBtn>
          <ShareIcon />共有
          <ShareChevron><Chev c="#fff" /></ShareChevron>
        </ShareBtn>
      </TabRow>

      <Ribbon>
        <Groups>
          <Group $w={108}>
            <GroupBody $pl={10}>
              <BigBtn $w={50} $off>
                <BigIcon><PasteIcon /></BigIcon>
                <Tight $ls={-0.5}>貼り付け</Tight>
                <PasteChevron><Chev c="#aaa" /></PasteChevron>
              </BigBtn>
              <Stack $w={36}>
                <ToolRow $h={22}><Tool $w={26} $ml={-2}><CutIcon /></Tool></ToolRow>
                <ToolRow $h={22}>
                  <Tool $w={26} $ml={-2}><CopyIcon /></Tool>
                  <Tool $w={12}><Chev /></Tool>
                </ToolRow>
                <ToolRow $h={22}><Tool $w={26} $ml={-2}><PainterIcon /></Tool></ToolRow>
              </Stack>
            </GroupBody>
            <GroupLabel $cx={19} $ls={-1.6}>クリップボード<Launcher><LauncherIcon /></Launcher></GroupLabel>
          </Group>

          <Group $w={280}>
            <GroupBody $pl={9} $pt={7}>
              <Stack $gap={7}>
                <ToolRow>
                  <ComboBox $w={169}>
                    <span>
                      <FullWidth>{'ＭＳ Ｐ'}</FullWidth>
                      <Tight $ls={-1.5}>ゴシック</Tight>
                    </span>
                    <Chev c="#444" />
                  </ComboBox>
                  <ComboBox $w={40} $ml={3}>
                    11
                    <Chev c="#444" />
                  </ComboBox>
                  <Tool $w={26} $ml={1}>
                    <SizeLetter><FontLetter $size={17}>A</FontLetter><Caret up /></SizeLetter>
                  </Tool>
                  <Tool $w={26} $ml={1}>
                    <SizeLetter><FontLetter $size={14}>A</FontLetter><Caret /></SizeLetter>
                  </Tool>
                </ToolRow>
                <ToolRow>
                  <Tool $w={25}><FontLetter $weight={700}>B</FontLetter></Tool>
                  <Tool $w={26}><FontLetter $italic $serif>I</FontLetter></Tool>
                  <Tool $w={26}><FontLetter $under>U</FontLetter></Tool>
                  <Tool $w={10}><Chev /></Tool>
                  <Sep $ml={6} />
                  <Tool $w={26}><BorderIcon /></Tool>
                  <Tool $w={12}><Chev /></Tool>
                  <Sep $ml={5} />
                  <Tool $w={28}><ColorLetter $bar="#ffff00"><BucketIcon /></ColorLetter></Tool>
                  <Tool $w={12}><Chev /></Tool>
                  <Tool $w={30}>
                    <ColorLetter $bar="#ff0000"><FontLetter $size={14}>A</FontLetter></ColorLetter>
                  </Tool>
                  <Tool $w={8}><Chev /></Tool>
                  <Sep $ml={6} />
                  <Tool $w={28}>
                    <Stack $gap={0}>
                      <FontLetter $size={9}>ア</FontLetter>
                      <FontLetter $size={9}>亜</FontLetter>
                    </Stack>
                  </Tool>
                  <Tool $w={8}><Chev /></Tool>
                </ToolRow>
              </Stack>
            </GroupBody>
            <GroupLabel $cx={115} $ls={-1}>フォント<Launcher><LauncherIcon /></Launcher></GroupLabel>
          </Group>

          <Group $w={325}>
            <GroupBody $pl={8} $pt={7}>
              <Stack $w={138} $gap={8}>
                <ToolRow>
                  <Tool $w={26}><Lines rows={[[1, 15, 2], [1, 15, 6], [1, 15, 0]]} /></Tool>
                  <Tool $w={26} $pressed><Lines rows={[[1, 15, 3], [1, 15, 7], [1, 15, 11]]} /></Tool>
                  <Tool $w={26}><Lines rows={[[1, 15, 5], [1, 15, 9], [1, 15, 13]]} /></Tool>
                  <Sep $ml={1} />
                  <Tool $w={28} $ml={1}><OrientIcon /></Tool>
                  <Tool $w={10}><Chev /></Tool>
                </ToolRow>
                <ToolRow>
                  <Tool $w={26}><Lines rows={[[1, 15, 1], [1, 10, 5], [1, 15, 9], [1, 10, 13]]} /></Tool>
                  <Tool $w={26}><Lines rows={[[1, 15, 1], [3, 13, 5], [1, 15, 9], [3, 13, 13]]} /></Tool>
                  <Tool $w={26}><Lines rows={[[1, 15, 1], [6, 15, 5], [1, 15, 9], [6, 15, 13]]} /></Tool>
                  <Sep $ml={1} />
                  <Tool $w={28}><IndentIcon /></Tool>
                  <Tool $w={26}><IndentIcon more /></Tool>
                </ToolRow>
              </Stack>
              <Sep $h={62} $ml={0} />
              <Stack $gap={8}>
                <ToolRow>
                  <TextTool $w={160} $ml={12}>
                    <TextToolIcon $w={18}><WrapIcon /></TextToolIcon>
                    <Tight $ls={-0.85}>折り返して全体を表示する</Tight>
                  </TextTool>
                </ToolRow>
                <ToolRow>
                  <TextTool $w={160} $ml={10}>
                    <TextToolIcon $w={20}><MergeIcon /></TextToolIcon>
                    <Tight $ls={-0.85}>セルを結合して中央揃え</Tight>
                    <TextToolChevron $ml={12}><Chev /></TextToolChevron>
                  </TextTool>
                </ToolRow>
              </Stack>
            </GroupBody>
            <GroupLabel $cx={145}>配置<Launcher><LauncherIcon /></Launcher></GroupLabel>
          </Group>

          <Group $w={162}>
            <GroupBody $pl={9} $pt={7}>
              <Stack $gap={8}>
                <ToolRow>
                  <ComboBox $w={145}>
                    通貨
                    <Chev c="#444" />
                  </ComboBox>
                </ToolRow>
                <ToolRow>
                  <Tool $w={26}><AccountIcon /></Tool>
                  <Tool $w={10}><Chev /></Tool>
                  <Tool $w={26} $ml={4}><FontLetter $size={19}>%</FontLetter></Tool>
                  <Tool $w={26}><CommaIcon /></Tool>
                  <Sep />
                  <Tool $w={26}><DecimalIcon more /></Tool>
                  <Tool $w={27}><DecimalIcon /></Tool>
                </ToolRow>
              </Stack>
            </GroupBody>
            <GroupLabel $cx={62}>数値<Launcher><LauncherIcon /></Launcher></GroupLabel>
          </Group>

          <Group $w={192}>
            <GroupBody $pl={5}>
              <BigBtn $w={58}>
                <BigIcon><CondIcon /></BigIcon>
                <span>条件付き</span>
                <BigLine>書式<Chev /></BigLine>
              </BigBtn>
              <BigBtn $w={64}>
                <BigIcon $pl={4}><TableStyleIcon /></BigIcon>
                <Tight $ls={-1.4}>テーブルとして</Tight>
                <BigLine>書式設定<Chev /></BigLine>
              </BigBtn>
              <BigBtn $w={62}>
                <BigIcon $pl={4}><CellStyleIcon /></BigIcon>
                <Tight $ls={-1}>セルの</Tight>
                <BigLine><Tight $ls={-0.5}>スタイル</Tight><Chev /></BigLine>
              </BigBtn>
            </GroupBody>
            <GroupLabel $cx={79} $ls={-1.4}>スタイル</GroupLabel>
          </Group>

          <Group $w={89}>
            <GroupBody $pl={12}>
              <Stack>
                <ToolRow $h={22}>
                  <TextTool $w={66}>
                    <TextToolIcon $w={21}><InsertCellIcon /></TextToolIcon>
                    挿入
                    <TextToolChevron $ml={15}><Chev /></TextToolChevron>
                  </TextTool>
                </ToolRow>
                <ToolRow $h={22}>
                  <TextTool $w={66}>
                    <TextToolIcon $w={21}><DeleteCellIcon /></TextToolIcon>
                    削除
                    <TextToolChevron $ml={15}><Chev /></TextToolChevron>
                  </TextTool>
                </ToolRow>
                <ToolRow $h={22}>
                  <TextTool $w={66}>
                    <TextToolIcon $w={21}><FormatCellIcon /></TextToolIcon>
                    書式
                    <TextToolChevron $ml={4}><Chev /></TextToolChevron>
                  </TextTool>
                </ToolRow>
              </Stack>
            </GroupBody>
            <GroupLabel $cx={33} $ls={-1}>セル</GroupLabel>
          </Group>

          <Group $w={162}>
            <GroupBody $pl={8}>
              <Stack $w={44}>
                <ToolRow $h={22}>
                  <Tool $w={26}><SigmaIcon /></Tool>
                  <Tool $w={10}><Chev /></Tool>
                </ToolRow>
                <ToolRow $h={22}>
                  <Tool $w={26}><FillDownIcon /></Tool>
                  <Tool $w={10}><Chev /></Tool>
                </ToolRow>
                <ToolRow $h={22}>
                  <Tool $w={26}><EraserIcon /></Tool>
                  <Tool $w={10}><Chev /></Tool>
                </ToolRow>
              </Stack>
              <BigBtn $w={56}>
                <BigIcon><SortIcon /></BigIcon>
                <Tight $ls={-1.4}>並べ替えと</Tight>
                <BigLine><Tight $ls={-1.8}>フィルター</Tight><Chev /></BigLine>
              </BigBtn>
              <BigBtn $w={52}>
                <BigIcon><FindIcon /></BigIcon>
                <span>検索と</span>
                <BigLine>選択<Chev /></BigLine>
              </BigBtn>
            </GroupBody>
            <GroupLabel $cx={70}>編集</GroupLabel>
          </Group>

          <Group $w={58}>
            <GroupBody>
              <BigBtn $w={58} $off>
                <BigIcon><AnalysisIcon /></BigIcon>
                <Tight $ls={-1.5}>データ</Tight>
                <span>分析</span>
              </BigBtn>
            </GroupBody>
            <GroupLabel $cx={17}>分析</GroupLabel>
          </Group>
          <Collapse><Chev c="#333" s={9} /></Collapse>
        </Groups>

        <QuickBar>
          <QuickItem>自動保存</QuickItem>
          <Toggle><ToggleKnob />オフ</Toggle>
          <QuickItem $ml={13} $w={20}><UndoIcon c="#555" /></QuickItem>
          <QuickItem $ls={-0.8}>元に戻す</QuickItem>
          <QuickItem $ml={11}><Chev /></QuickItem>
          <QuickItem $ml={11} $w={20}><UndoIcon c="#b0b0b0" flip /></QuickItem>
          <QuickItem $off $ls={-1.4}>やり直し</QuickItem>
          <QuickItem $ml={10}><Chev c="#b0b0b0" /></QuickItem>
          <QuickItem $ml={11} $w={21}><SaveIcon /></QuickItem>
          <QuickItem $ls={-0.4}>上書き保存</QuickItem>
          <QuickItem $ml={22}><QatMenuIcon /></QuickItem>
        </QuickBar>
      </Ribbon>

      <FormulaBar>
        <NameBox>P111<Chev c="#333" s={8} /></NameBox>
        <Kebab><KebabIcon /></Kebab>
        <FxBox>
          <FxMarks><CrossMark /><CheckMark /></FxMarks>
          fx
        </FxBox>
        <FormulaInput><Chev c="#333" s={8} /></FormulaInput>
      </FormulaBar>

      <SheetArea>
        <Sheet />
        <ScrollV>
          <ScrollTrack>
            <Tri dir="up" />
            <ThumbV />
            <ArrowDown><Tri dir="down" /></ArrowDown>
          </ScrollTrack>
        </ScrollV>
      </SheetArea>

      <SheetTabs>
        <NavArrows><NavArrow /><NavArrow right /></NavArrows>
        <ActiveTab>Sheet1</ActiveTab>
        <SheetTabGap />
        <SheetTab $w={77}>Sheet2</SheetTab>
        <SheetTab $w={77}>Sheet3</SheetTab>
        <AddSheet><PlusIcon /></AddSheet>
        <Kebab2><KebabIcon /></Kebab2>
        <ScrollH>
          <Tri dir="left" />
          <ThumbH />
          <Tri dir="right" />
        </ScrollH>
      </SheetTabs>

      <StatusBar>
        <span>準備完了</span>
        <Accessibility><A11yIcon />アクセシビリティ: 利用不可</Accessibility>
        <ViewBtn $on><NormalViewIcon /></ViewBtn>
        <ViewBtn><PageViewIcon /></ViewBtn>
        <ViewBtn><BreakViewIcon /></ViewBtn>
        <Zoom>
          −
          <ZoomTrack><ZoomKnob /></ZoomTrack>
          +
          <ZoomLabel>100%</ZoomLabel>
        </Zoom>
      </StatusBar>
    </Window>
  </Desktop>
);

export default App;
